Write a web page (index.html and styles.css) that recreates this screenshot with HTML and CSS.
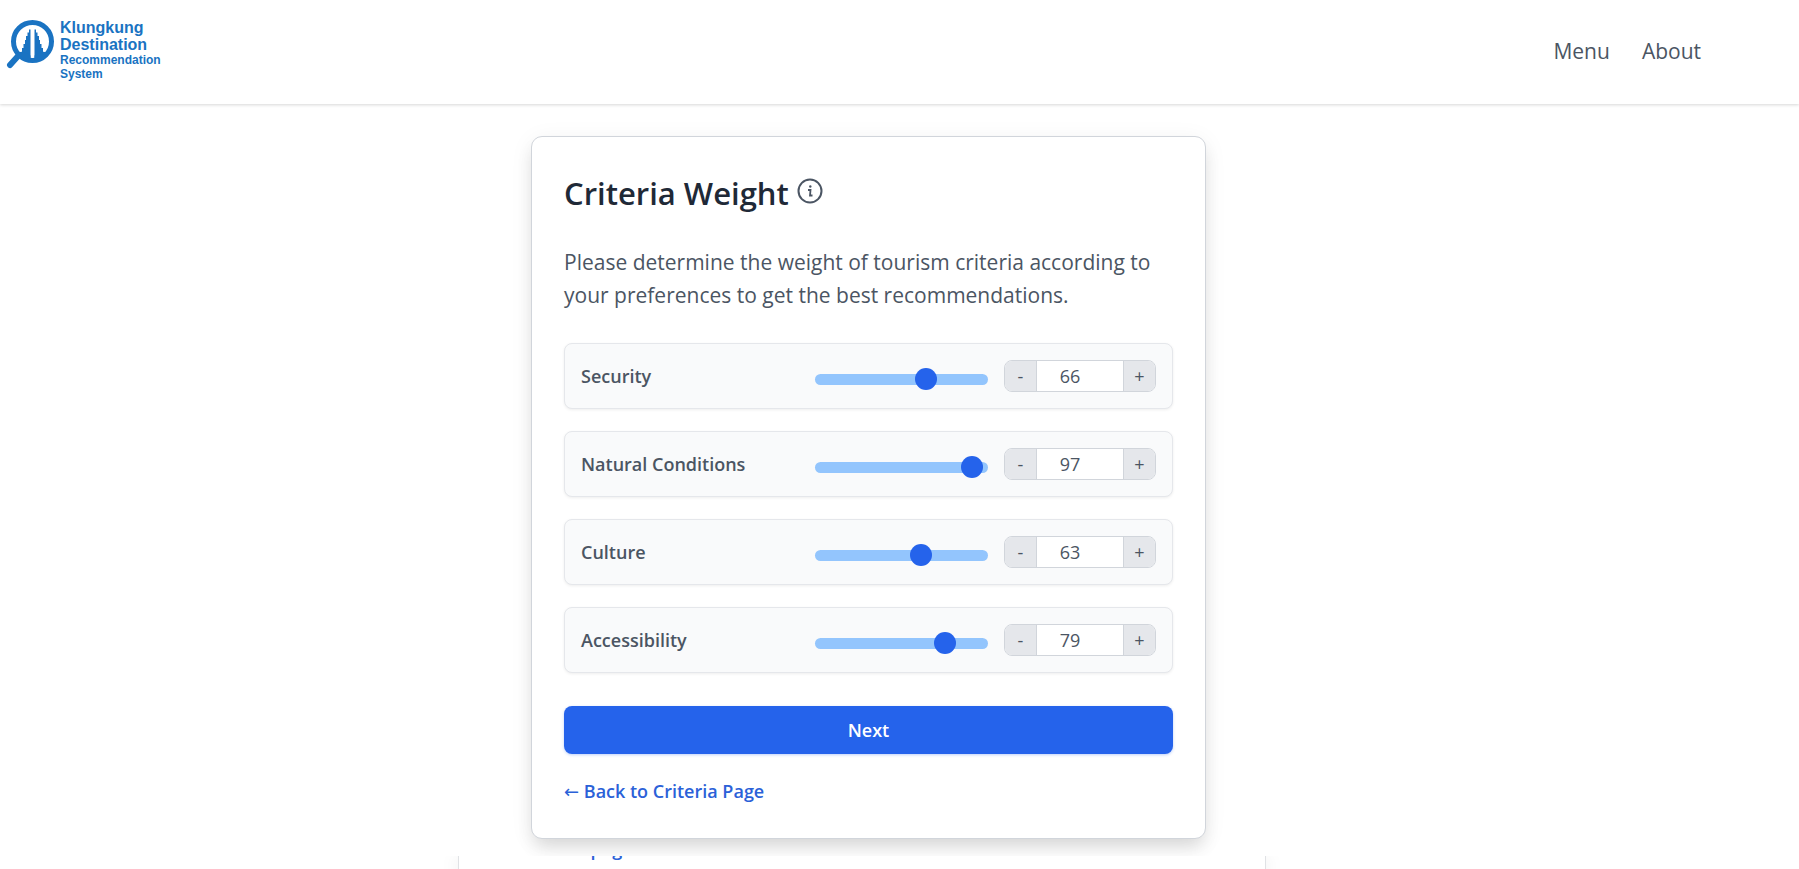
FILE: index.html
```html
<!DOCTYPE html>
<html lang="en">
<head>
<meta charset="utf-8">
<title>Criteria Weight</title>
<link rel="stylesheet" href="styles.css">
</head>
<body>
<header class="site-header">
  <a class="brand" href="#">
    <svg class="brand-mark" viewBox="0 0 50 52" aria-hidden="true">
      <circle cx="26.500" cy="22.500" r="19" fill="#fff" stroke="#1a73c2" stroke-width="5"/>
      <path d="M13 36 4 46" stroke="#1a73c2" stroke-width="6" stroke-linecap="round"/>
      <path d="M24.500 10.500V41L14 36l2-3.500V29h1.500v-4H19v-4h1v-4h1.500v-3.500H23v-3zM28.500 10.500V41L39 36l-2-3.500V29h-1.500v-4H34v-4h-1v-4h-1.500v-3.500H30v-3z" fill="#1a73c2"/>
      <path d="M11.500 34q4-2 7-1l6 3.500V42Q16 41 11.500 34zM41.500 34q-4-2-7-1l-6 3.500V42Q37 41 41.500 34z" fill="#1a73c2"/>
    </svg>
    <span class="brand-text">
      <span class="brand-large">Klungkung</span>
      <span class="brand-large">Destination</span>
      <span class="brand-small">Recommendation</span>
      <span class="brand-small">System</span>
    </span>
  </a>
  <nav class="site-nav">
    <a href="#">Menu</a>
    <a href="#">About</a>
  </nav>
</header>

<main class="main">
  <form class="card">
    <div class="card-head">
      <h1>Criteria Weight</h1>
      <button class="info" type="button" aria-label="Information">
        <svg viewBox="0 0 26 26" fill="none" stroke="#4b5563" aria-hidden="true">
          <circle cx="13" cy="13" r="11.500" stroke-width="2"/>
          <path d="M11 12h2.500l-.5 5.500h2.500" stroke-width="1.800"/>
          <circle cx="13.300" cy="8.500" r="1.200" fill="#4b5563" stroke="none"/>
        </svg>
      </button>
    </div>
    <p class="intro">Please determine the weight of tourism criteria according to your preferences to get the best recommendations.</p>

    <div class="criteria">
      <div class="criterion">
        <label for="security">Security</label>
        <input class="slider" id="security" type="range" min="0" max="100" value="66">
        <div class="stepper">
          <button type="button" aria-label="Decrease security">-</button>
          <input type="text" inputmode="numeric" value="66" aria-label="Security value">
          <button type="button" aria-label="Increase security">+</button>
        </div>
      </div>
      <div class="criterion">
        <label for="nature">Natural Conditions</label>
        <input class="slider" id="nature" type="range" min="0" max="100" value="97">
        <div class="stepper">
          <button type="button" aria-label="Decrease natural conditions">-</button>
          <input type="text" inputmode="numeric" value="97" aria-label="Natural conditions value">
          <button type="button" aria-label="Increase natural conditions">+</button>
        </div>
      </div>
      <div class="criterion">
        <label for="culture">Culture</label>
        <input class="slider" id="culture" type="range" min="0" max="100" value="63">
        <div class="stepper">
          <button type="button" aria-label="Decrease culture">-</button>
          <input type="text" inputmode="numeric" value="63" aria-label="Culture value">
          <button type="button" aria-label="Increase culture">+</button>
        </div>
      </div>
      <div class="criterion">
        <label for="access">Accessibility</label>
        <input class="slider" id="access" type="range" min="0" max="100" value="79">
        <div class="stepper">
          <button type="button" aria-label="Decrease accessibility">-</button>
          <input type="text" inputmode="numeric" value="79" aria-label="Accessibility value">
          <button type="button" aria-label="Increase accessibility">+</button>
        </div>
      </div>
    </div>

    <button class="next" type="submit">Next</button>
    <a class="back" href="#"><span class="arrow">←</span> Back to Criteria Page</a>
  </form>
</main>

<section class="below">
  <div class="below-card"><a href="#">page</a></div>
</section>
</body>
</html>
```
FILE: styles.css
```css
* {
  box-sizing: border-box;
}

body {
  margin: 0;
  height: 100vh;
  overflow: hidden;
  display: flex;
  flex-direction: column;
  background: #fff;
  color: #4b5563;
  font-family: "Open Sans", "Noto Sans", sans-serif;
  font-size: 18px;
}

a {
  color: inherit;
  text-decoration: none;
}

button,
input {
  margin: 0;
  font: inherit;
  color: inherit;
}

.site-header {
  flex: none;
  display: flex;
  align-items: center;
  justify-content: space-between;
  height: 104px;
  padding: 0 98px 2px 6px;
  background: #fff;
  box-shadow: 0 1px 3px rgba(0, 0, 0, 0.16);
}

.brand {
  display: flex;
  gap: 4px;
  padding-bottom: 3px;
  color: #1a73c2;
  font-family: "Liberation Sans", Arial, sans-serif;
  font-weight: 700;
}

.brand-mark {
  width: 50px;
  height: 52px;
}

.brand-text {
  display: flex;
  flex-direction: column;
}

.brand-large {
  font-size: 16px;
  line-height: 17px;
}

.brand-small {
  font-size: 12px;
  line-height: 14px;
}

.site-nav {
  display: flex;
  gap: 32px;
  font-size: 21px;
}

.main {
  flex: none;
  padding: 32px 62px 17px 0;
}

.card {
  max-width: 675px;
  margin: 0 auto;
  padding: 32px;
  border: 1px solid #d1d5db;
  border-radius: 11px;
  background: #fff;
  box-shadow: 0 11px 17px -3px rgba(0, 0, 0, 0.12), 0 4px 24px rgba(0, 0, 0, 0.06);
}

.card-head {
  display: flex;
  align-items: center;
  gap: 8px;
}

h1 {
  margin: 0;
  color: #1f2937;
  font-size: 31px;
  line-height: 48px;
  font-weight: 600;
}

.info {
  display: flex;
  padding: 0 0 4px;
  border: 0;
  background: none;
}

.info svg {
  width: 26px;
  height: 26px;
}

.intro {
  margin: 29px 0 31px;
  font-size: 21px;
  line-height: 33px;
}

.criteria {
  display: grid;
  gap: 22px;
}

.criterion {
  display: flex;
  align-items: center;
  gap: 16px;
  padding: 16px;
  border: 1px solid #e5e7eb;
  border-radius: 8px;
  background: #f9fafb;
  box-shadow: 0 1px 3px rgba(0, 0, 0, 0.07);
}

.criterion label {
  flex: 1;
  font-weight: 600;
}

.slider {
  appearance: none;
  width: 173px;
  height: 11px;
  margin-top: 6px;
  border-radius: 6px;
  background: #93c5fd;
}

.slider::-webkit-slider-thumb {
  appearance: none;
  width: 22px;
  height: 22px;
  border-radius: 50%;
  background: #2563eb;
}

.stepper {
  display: flex;
  height: 32px;
  border: 1px solid #d1d5db;
  border-radius: 8px;
  overflow: hidden;
}

.stepper button {
  width: 31px;
  padding: 0;
  border: 0;
  background: #e5e7eb;
}

.stepper input {
  width: 88px;
  padding: 0 20px 0 0;
  border: 0;
  border-left: 1px solid #d1d5db;
  border-right: 1px solid #d1d5db;
  background: #fff;
  text-align: center;
}

.next {
  display: block;
  width: 100%;
  height: 48px;
  margin: 33px 0 23px;
  border: 0;
  border-radius: 8px;
  background: #2563eb;
  color: #fff;
  font-weight: 600;
  box-shadow: 0 1px 3px rgba(37, 99, 235, 0.3);
}

.back {
  display: block;
  line-height: 28px;
  color: #2b61d8;
  font-weight: 600;
}

.arrow {
  font-family: "DejaVu Sans", sans-serif;
  font-weight: 400;
}

.below {
  position: relative;
  flex: 1;
  min-height: 0;
  overflow: hidden;
  padding-right: 76px;
  background: #fff;
}

.below-card {
  display: flow-root;
  max-width: 808px;
  height: 100%;
  margin: 0 auto;
  padding-left: 132px;
  border: solid #e0e2e5;
  border-width: 0 1px;
  background: #fff;
  box-shadow: 0 4px 20px rgba(0, 0, 0, 0.1);
}

.below-card a {
  display: block;
  margin-top: -20px;
  line-height: 26px;
  color: #2b61d8;
  font-weight: 600;
}
```
